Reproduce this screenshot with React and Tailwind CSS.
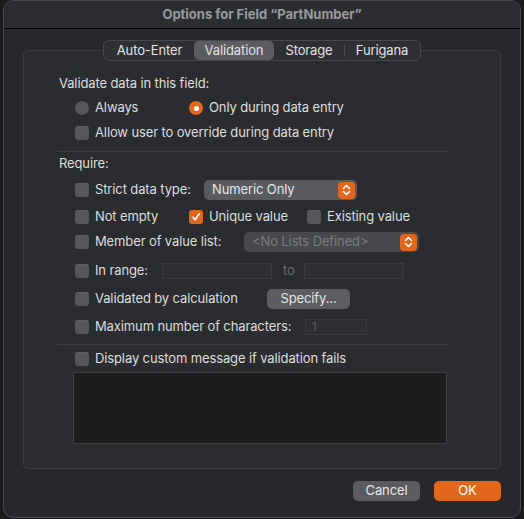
import React from 'react';

const font = { fontFamily: 'Inter, "Noto Sans", "Liberation Sans", sans-serif' };

const Stepper = () => (
  <span className="flex h-[17px] w-[17px] items-center justify-center rounded-[4px] bg-[#e0671c]">
    <svg width="9" height="12" viewBox="0 0 9 12" fill="none" stroke="white" strokeWidth="1.6" strokeLinecap="round" strokeLinejoin="round">
      <path d="M1.5 4.5 L4.5 1.5 L7.5 4.5" />
      <path d="M1.5 7.5 L4.5 10.5 L7.5 7.5" />
    </svg>
  </span>
);

const Check = ({ checked }) => (
  <span
    className={
      'flex h-[14px] w-[14px] shrink-0 items-center justify-center rounded-[3px] ' +
      (checked ? 'bg-[#e0671c]' : 'bg-[#56575b] border-t border-[#606165]')
    }
  >
    {checked && (
      <svg width="10" height="10" viewBox="0 0 10 10" fill="none" stroke="white" strokeWidth="1.8" strokeLinecap="round" strokeLinejoin="round">
        <path d="M2 5.3 L4.2 7.6 L8.2 2" />
      </svg>
    )}
  </span>
);

const Radio = ({ checked }) => (
  <span
    className={
      'flex h-[14px] w-[14px] shrink-0 items-center justify-center rounded-full ' +
      (checked ? 'bg-[#e0671c]' : 'bg-[#56575b]')
    }
  >
    {checked && <span className="h-[5px] w-[5px] rounded-full bg-white" />}
  </span>
);

const Item = ({ w, children, checked, radio }) => (
  <div className={'flex items-center gap-[6px] ' + (w || '')}>
    {radio ? <Radio checked={checked} /> : <Check checked={checked} />}
    <span className="whitespace-nowrap">{children}</span>
  </div>
);

const Field = ({ w, children }) => (
  <div className={'h-[16px] border border-[#3b3c3f] bg-[#2e2f32] pl-[6px] text-[12px] leading-[14px] text-[#5c5d60] ' + w}>
    {children}
  </div>
);

export default function App() {
  return (
    <div className="h-[519px] w-[524px] bg-[#1a1a1c] pl-[3px]" style={font}>
      <div className="flex h-[518px] w-[518px] flex-col overflow-hidden rounded-[10px] border border-[#48494c] bg-[#27282b] text-[13px] tracking-[-0.12px] text-[#dedede]">
        <div className="flex h-[28px] shrink-0 items-center justify-center border-b border-black bg-[#2c2d30] text-[13px] font-bold tracking-normal text-[#9b9b9d]">
          Options for Field “PartNumber”
        </div>

        <div className="flex flex-col px-[19px]">
          <div className="relative z-10 mx-auto mt-[11px] flex h-[21px] w-[318px] items-center rounded-[6px] border border-[#47484b] bg-[#2f3033] px-[1px] text-[13px] text-[#e2e2e2]">
            <div className="flex h-[19px] w-[89px] items-center justify-center">Auto-Enter</div>
            <div className="flex h-[19px] w-[80px] items-center justify-center rounded-[5px] bg-[#5c5d61]">Validation</div>
            <div className="flex h-[19px] w-[70px] items-center justify-center">Storage</div>
            <div className="h-[12px] w-px bg-[#4a4b4e]" />
            <div className="flex h-[19px] flex-1 items-center justify-center">Furigana</div>
          </div>

          <div className="-mt-[11px] flex w-[478px] flex-col rounded-[5px] border border-[#3d3e41] bg-[#2b2c2f] pb-[24px] pl-[35px] pt-[25px]">
            <div className="flex h-[16px] items-center">Validate data in this field:</div>

            <div className="mt-[6px] flex h-[20px] items-center pl-[16px]">
              <Item w="w-[114px]" radio>Always</Item>
              <Item radio checked>Only during data entry</Item>
            </div>

            <div className="mt-[5px] flex h-[20px] items-center pl-[16px]">
              <Item>Allow user to override during data entry</Item>
            </div>

            <div className="-ml-[2px] mt-[8px] h-px w-[391px] bg-[#3e3f42]" />

            <div className="mt-[4px] flex h-[16px] items-center">Require:</div>

            <div className="mt-[8px] flex h-[20px] items-center pl-[16px]">
              <Item w="w-[129px]">Strict data type:</Item>
              <div className="flex h-[20px] w-[153px] items-center justify-between rounded-[5px] bg-[#5a5b5f] pl-[8px] pr-[2px] text-[#e6e6e6]">
                <span>Numeric Only</span>
                <Stepper />
              </div>
            </div>

            <div className="mt-[7px] flex h-[20px] items-center pl-[16px]">
              <Item w="w-[114px]">Not empty</Item>
              <Item w="w-[118px]" checked>Unique value</Item>
              <Item>Existing value</Item>
            </div>

            <div className="mt-[5px] flex h-[20px] items-center pl-[16px]">
              <Item w="w-[169px]">Member of value list:</Item>
              <div className="flex h-[20px] w-[175px] items-center justify-between rounded-[5px] bg-[#47484b] pl-[8px] pr-[2px] text-[#7b7c7f]">
                <span>&lt;No Lists Defined&gt;</span>
                <Stepper />
              </div>
            </div>

            <div className="mt-[9px] flex h-[20px] items-center pl-[16px]">
              <Item w="w-[87px]">In range:</Item>
              <Field w="w-[110px]" />
              <span className="w-[32px] pl-[11px] text-[#6a6b6e]">to</span>
              <Field w="w-[100px]" />
            </div>

            <div className="mt-[8px] flex h-[20px] items-center pl-[16px]">
              <Item w="w-[192px]">Validated by calculation</Item>
              <div className="flex h-[20px] w-[83px] items-center justify-center rounded-[5px] bg-[#5c5d61] text-[#e6e6e6]">
                Specify...
              </div>
            </div>

            <div className="mt-[8px] flex h-[20px] items-center pl-[16px]">
              <Item w="w-[230px]">Maximum number of characters:</Item>
              <Field w="w-[62px]">1</Field>
            </div>

            <div className="-ml-[2px] mt-[7px] h-px w-[391px] bg-[#3e3f42]" />

            <div className="mt-[6px] flex h-[16px] items-center pl-[16px]">
              <Item>Display custom message if validation fails</Item>
            </div>

            <div className="ml-[14px] mt-[5px] h-[72px] w-[374px] border border-[#3e3f42] bg-[#1d1d1e]" />
          </div>

          <div className="mt-[12px] flex w-[478px] justify-end gap-[14px]">
            <div className="flex h-[20px] w-[67px] items-center justify-center rounded-[5px] bg-[#5b5c60] text-[#e8e8e8]">
              Cancel
            </div>
            <div className="flex h-[20px] w-[67px] items-center justify-center rounded-[5px] bg-[#e0671c] text-white">
              OK
            </div>
          </div>
        </div>
      </div>
    </div>
  );
}
